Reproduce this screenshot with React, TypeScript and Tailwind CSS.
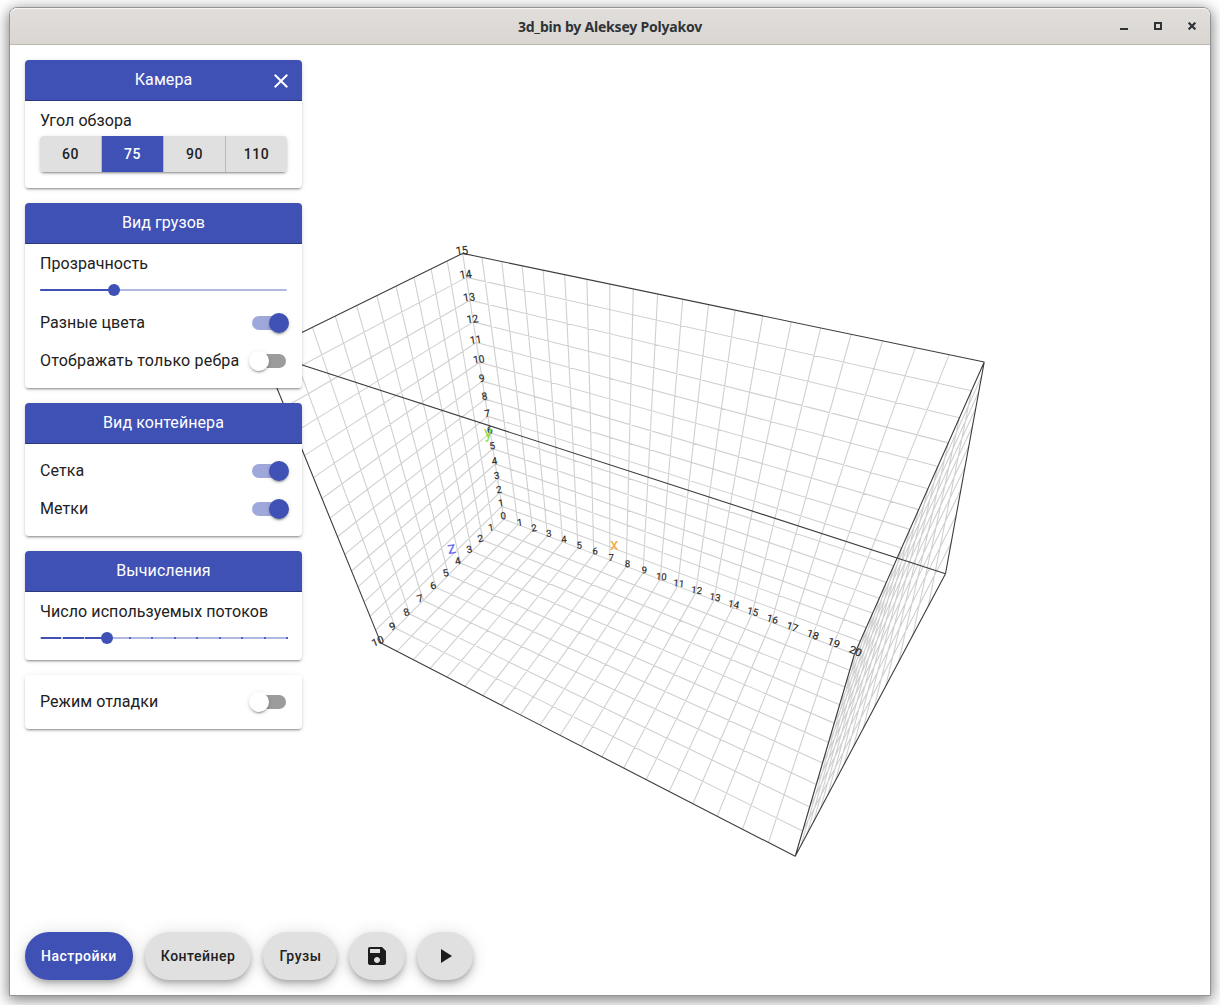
import React from "react";

type Vec = [number, number, number];

/* ---------- 3D container scene ---------- */

const SIZE: Vec = [20, 15, 10];
const VIEW = { w: 1200, h: 950 };
const CAMERA = { pos: [18.0851, 24.1119, 20.6441] as Vec, yaw: 0.4924, pitch: 0.7351, focal: 619 };

const sinA = Math.sin(CAMERA.yaw);
const cosA = Math.cos(CAMERA.yaw);
const sinP = Math.sin(CAMERA.pitch);
const cosP = Math.cos(CAMERA.pitch);
const FORWARD: Vec = [-sinA * cosP, -sinP, -cosA * cosP];
const RIGHT: Vec = [cosA, 0, -sinA];
const UP: Vec = [-sinA * sinP, cosP, -cosA * sinP];

const dot = (a: Vec, b: Vec) => a[0] * b[0] + a[1] * b[1] + a[2] * b[2];
const sub = (a: Vec, b: Vec): Vec => [a[0] - b[0], a[1] - b[1], a[2] - b[2]];
const cross = (a: Vec, b: Vec): Vec => [
  a[1] * b[2] - a[2] * b[1],
  a[2] * b[0] - a[0] * b[2],
  a[0] * b[1] - a[1] * b[0],
];
const unit = (a: Vec): Vec => {
  const l = Math.sqrt(dot(a, a));
  return [a[0] / l, a[1] / l, a[2] / l];
};

function project(p: Vec): [number, number] {
  const d = sub(p, CAMERA.pos);
  const z = dot(d, FORWARD);
  return [
    VIEW.w / 2 + (CAMERA.focal * dot(d, RIGHT)) / z,
    VIEW.h / 2 - (CAMERA.focal * dot(d, UP)) / z,
  ];
}

function segment(a: Vec, b: Vec) {
  const [x1, y1] = project(a);
  const [x2, y2] = project(b);
  return `M${x1.toFixed(2)} ${y1.toFixed(2)}L${x2.toFixed(2)} ${y2.toFixed(2)}`;
}

/* Orientation of a flat label that looks at the camera and keeps a constant size. */
function labelTransform(p: Vec, dx: number, dy: number) {
  const toCam = sub(CAMERA.pos, p);
  const dist = Math.sqrt(dot(toCam, toCam));
  const n = unit(toCam);
  const r = unit(cross([0, 1, 0], n));
  const u = cross(n, r);
  const k = (dist / CAMERA.focal) * 0.95;
  const at = (v: Vec): [number, number] => project([p[0] + v[0] * k, p[1] + v[1] * k, p[2] + v[2] * k]);
  const [x0, y0] = project(p);
  const [rx, ry] = at(r);
  const [ux, uy] = at(u);
  return `matrix(${rx - x0} ${ry - y0} ${x0 - ux} ${y0 - uy} ${x0 + dx} ${y0 + dy})`;
}

const [SX, SY, SZ] = SIZE;
const range = (from: number, to: number) => Array.from({ length: to - from + 1 }, (_, i) => from + i);

const gridPath = [
  ...range(0, SX - 1).flatMap((x) => [segment([x, 0, 0], [x, SY, 0]), segment([x, 0, 0], [x, 0, SZ])]),
  ...range(0, SY - 1).flatMap((y) => [
    segment([0, y, 0], [SX, y, 0]),
    segment([0, y, 0], [0, y, SZ]),
    segment([SX, y, 0], [SX, y, SZ]),
  ]),
  ...range(1, SZ - 1).flatMap((z) => [
    segment([0, 0, z], [SX, 0, z]),
    segment([0, 0, z], [0, SY, z]),
    segment([SX, 0, z], [SX, SY, z]),
  ]),
].join("");

const edgePath = [
  segment([0, SY, 0], [SX, SY, 0]),
  segment([0, SY, SZ], [SX, SY, SZ]),
  segment([0, SY, 0], [0, SY, SZ]),
  segment([SX, SY, 0], [SX, SY, SZ]),
  segment([0, 0, SZ], [0, SY, SZ]),
  segment([SX, 0, SZ], [SX, SY, SZ]),
  segment([SX, 0, 0], [SX, SY, 0]),
  segment([SX, 0, 0], [SX, 0, SZ]),
  segment([0, 0, SZ], [SX, 0, SZ]),
].join("");

const ticks: { p: Vec; text: number; dx: number; dy: number }[] = [
  ...range(0, SY).map((v) => ({ p: [0, v, 0] as Vec, text: v, dx: -0.2, dy: 0.07 * v })),
  ...range(1, SX).map((v) => ({ p: [v, 0, 0] as Vec, text: v, dx: 2.2 - 0.13 * v, dy: 1 - 0.05 * v })),
  ...range(1, SZ).map((v) => ({ p: [0, 0, v] as Vec, text: v, dx: -2, dy: 1.4 })),
];

function Scene() {
  return (
    <svg className="absolute inset-0 tracking-normal" width="1200" height="950" viewBox="0 0 1200 950" fill="none">
      <path d={gridPath} stroke="#d0d0d0" strokeWidth="1.1" />
      <path d={edgePath} stroke="#3c3c3c" strokeWidth="1.1" />
      <g className="font-['Roboto',sans-serif]" fontSize="10" textAnchor="middle" fill="#262626" stroke="#262626" strokeWidth="0.15">
        {ticks.map((t, i) => (
          <text key={i} transform={labelTransform(t.p, t.dx, t.dy)}>
            {t.text}
          </text>
        ))}
      </g>
      <g className="font-['Roboto',sans-serif]" fontSize="17" textAnchor="middle">
        <text transform="translate(604.3 505.3)" fill="#f2ab3c">x</text>
        <text transform="translate(478.5 393) rotate(-4)" fill="#84df3a">y</text>
        <text transform="translate(442.5 508.5) rotate(-10)" fill="#6c6cf2">z</text>
      </g>
    </svg>
  );
}

/* ---------- Panel widgets ---------- */

function Card({ title, closable, children }: { title?: string; closable?: boolean; children: React.ReactNode }) {
  return (
    <section className="rounded-[4px] bg-white shadow-[0_3px_1px_-2px_rgba(0,0,0,0.2),0_2px_2px_0_rgba(0,0,0,0.14),0_1px_5px_0_rgba(0,0,0,0.12)]">
      {title && (
        <header className="relative flex h-[41px] items-center justify-center rounded-t-[4px] border-b border-[#2c397f] bg-[#3f51b5] pb-px text-white">
          {title}
          {closable && (
            <svg className="absolute top-[9px] right-[9px]" width="24" height="24" viewBox="0 0 24 24" fill="#fff">
              <path d="M19 6.41L17.59 5 12 10.59 6.41 5 5 6.41 10.59 12 5 17.59 6.41 19 12 13.41 17.59 19 19 17.59 13.41 12z" />
            </svg>
          )}
        </header>
      )}
      <div className="px-[15px] py-2">{children}</div>
    </section>
  );
}

function Toggle({ label, on, wide }: { label: string; on?: boolean; wide?: boolean }) {
  return (
    <div className="flex h-[38px] items-center justify-between whitespace-nowrap">
      <span className={wide ? "tracking-[0.2px]" : ""}>{label}</span>
      <span className="relative -mr-0.5 flex h-5 w-10 shrink-0 items-center">
        <span className={on ? "ml-[3px] h-3.5 w-[34px] rounded-full bg-[#9fa8da]" : "ml-[3px] h-3.5 w-[34px] rounded-full bg-[#9c9c9c]"} />
        <span
          className={
            on
              ? "absolute right-0 size-5 rounded-full bg-[#3f51b5] shadow-[0_3px_1px_-2px_rgba(0,0,0,0.2),0_2px_2px_0_rgba(0,0,0,0.14),0_1px_5px_0_rgba(0,0,0,0.12)]"
              : "absolute left-0 size-5 rounded-full bg-white shadow-[0_3px_1px_-2px_rgba(0,0,0,0.2),0_2px_2px_0_rgba(0,0,0,0.14),0_1px_5px_0_rgba(0,0,0,0.12)]"
          }
        />
      </span>
    </div>
  );
}

function Slider({ value, steps }: { value: number; steps?: number }) {
  return (
    <div className="relative flex h-7 items-center">
      <div className="h-0.5 w-full rounded-full bg-[#b2b9e1]">
        <div className="h-0.5 rounded-full bg-[#3f51b5]" style={{ width: `${value * 100}%` }} />
      </div>
      {steps &&
        range(0, steps).map((i) => (
          <span
            key={i}
            className={i / steps < value ? "absolute h-0.5 w-[1.5px] bg-[#c5cae9]" : "absolute h-0.5 w-0.5 bg-[#5564bd]"}
            style={{ left: `calc(${(i / steps) * 100}% - ${i === 0 ? 0.5 : 1}px)` }}
          />
        ))}
      <span className="absolute -ml-1.5 size-3 rounded-full bg-[#3f51b5]" style={{ left: `${value * 100}%` }} />
    </div>
  );
}

function FieldOfView() {
  return (
    <div className="mt-[3px] mb-2 rounded-[4px] shadow-[0_3px_1px_-2px_rgba(0,0,0,0.2),0_2px_2px_0_rgba(0,0,0,0.14),0_1px_5px_0_rgba(0,0,0,0.12)]">
      <div className="flex h-9 overflow-hidden rounded-[4px] text-[14px] font-medium tracking-[0.5px]">
        {[60, 75, 90, 110].map((v, i) => (
          <button
            key={v}
            className={
              v === 75
                ? "flex-1 border-l border-[#b9b9bb] bg-[#3f51b5] text-white"
                : i === 0
                  ? "flex-1 bg-[#e0e0e0]"
                  : "flex-1 border-l border-[#b9b9bb] bg-[#e0e0e0]"
            }
          >
            {v}
          </button>
        ))}
      </div>
    </div>
  );
}

function Fab({ active, children }: { active?: boolean; children: React.ReactNode }) {
  return (
    <button
      className={
        active
          ? "flex h-12 items-center rounded-full bg-[#3f51b5] px-4 text-white shadow-[0_3px_5px_-1px_rgba(0,0,0,0.2),0_6px_10px_0_rgba(0,0,0,0.14),0_1px_18px_0_rgba(0,0,0,0.12)]"
          : "flex h-12 items-center rounded-full bg-[#e0e0e0] px-4 shadow-[0_3px_5px_-1px_rgba(0,0,0,0.2),0_6px_10px_0_rgba(0,0,0,0.14),0_1px_18px_0_rgba(0,0,0,0.12)]"
      }
    >
      {children}
    </button>
  );
}

function TitleBar() {
  return (
    <div className="relative flex h-[37px] items-center justify-center rounded-t-[7px] border-b border-[#bfb8b1] bg-gradient-to-b from-[#e1dedb] to-[#dad6d2] pt-px font-['Noto_Sans',sans-serif] text-[14px] font-bold tracking-[-0.2px] text-[#2e3436] shadow-[inset_0_1px_0_#f6f5f4]">
      3d_bin by Aleksey Polyakov
      <div className="absolute top-[14px] right-[14px] flex gap-[26px]">
        <span className="mt-1.5 h-0.5 w-2 bg-[#2e3436]" />
        <span className="size-2 border-2 border-[#2e3436]" />
        <svg width="8" height="8" viewBox="0 0 8 8" stroke="#2e3436" strokeWidth="2.2">
          <path d="M.6.6l6.8 6.8M7.4.6L.6 7.4" />
        </svg>
      </div>
    </div>
  );
}

export default function App() {
  return (
    <div className="h-[1005px] w-[1220px] overflow-hidden bg-white pt-[7px] pl-[9px]">
      <div className="flex h-[989px] w-[1202px] flex-col rounded-t-[8px] border border-[#949494] bg-white shadow-[0_3px_14px_1px_rgba(0,0,0,0.5)]">
        <TitleBar />
        <main className="relative flex flex-1 flex-col justify-between overflow-hidden p-[15px] font-['Roboto',sans-serif] text-[16px] leading-6 tracking-[0.07px] text-[#212121]">
          <Scene />
          <aside className="relative flex w-[277px] flex-col gap-[15px]">
            <Card title="Камера" closable>
              <div>Угол обзора</div>
              <FieldOfView />
            </Card>
            <Card title="Вид грузов">
              <div>Прозрачность</div>
              <Slider value={0.3} />
              <Toggle label="Разные цвета" on />
              <Toggle label="Отображать только ребра" wide />
            </Card>
            <Card title="Вид контейнера">
              <Toggle label="Сетка" on />
              <Toggle label="Метки" on />
            </Card>
            <Card title="Вычисления">
              <div className="whitespace-nowrap">Число используемых потоков</div>
              <Slider value={3 / 11} steps={11} />
            </Card>
            <Card>
              <Toggle label="Режим отладки" />
            </Card>
          </aside>
          <nav className="relative flex gap-3 text-[14px] font-medium tracking-[0.5px]">
            <Fab active>Настройки</Fab>
            <Fab>Контейнер</Fab>
            <Fab>Грузы</Fab>
            <Fab>
              <svg width="24" height="24" viewBox="0 0 24 24" fill="#1c1c1c">
                <path d="M17 3H5c-1.11 0-2 .9-2 2v14c0 1.1.89 2 2 2h14c1.1 0 2-.9 2-2V7l-4-4zm-5 16c-1.66 0-3-1.34-3-3s1.34-3 3-3 3 1.34 3 3-1.34 3-3 3zm3-10H5V5h10v4z" />
              </svg>
            </Fab>
            <Fab>
              <svg width="24" height="24" viewBox="0 0 24 24" fill="#1c1c1c">
                <path d="M8 5v14l11-7z" />
              </svg>
            </Fab>
          </nav>
        </main>
      </div>
    </div>
  );
}
